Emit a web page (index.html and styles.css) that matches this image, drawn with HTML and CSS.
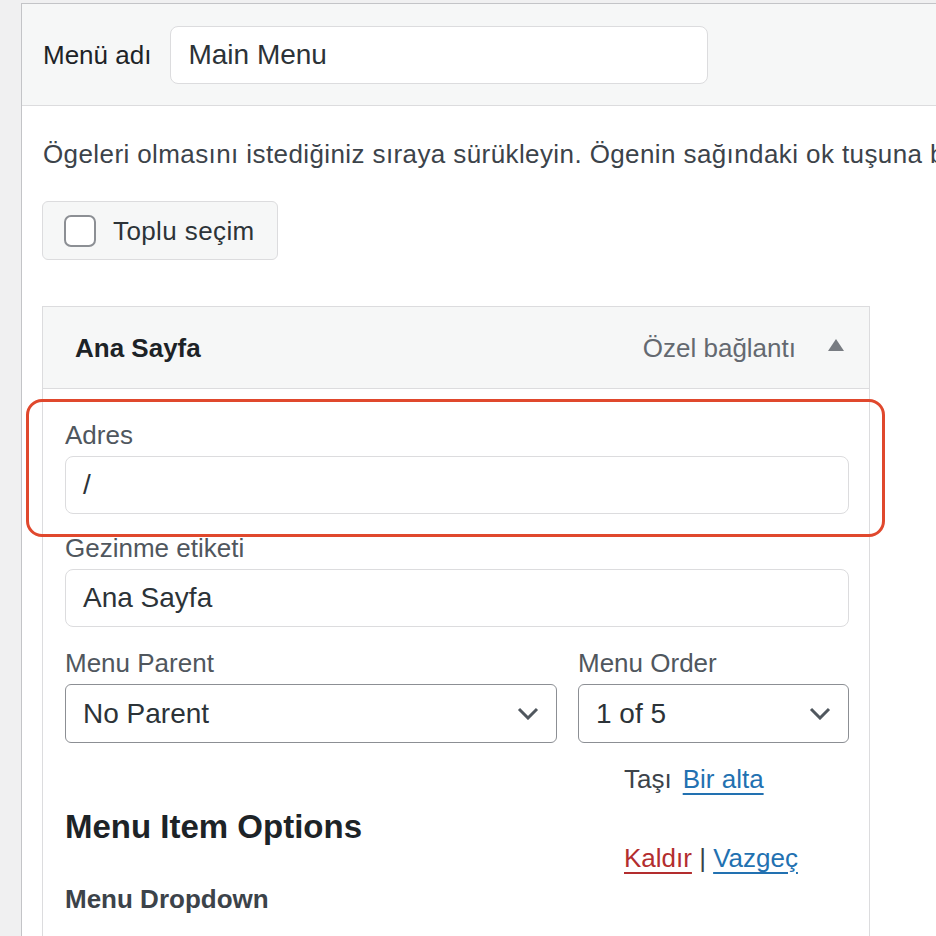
FILE: index.html
```html
<!DOCTYPE html>
<html lang="tr">
<head>
    <meta charset="UTF-8">
    <meta name="viewport" content="width=device-width, initial-scale=1.0">
    <title>Menüler</title>
    <link rel="stylesheet" href="styles.css">
</head>
<body>
    <div class="page">
        <div class="menu-panel">
            <div class="menu-name">
                <label class="menu-name-label">Menü adı</label>
                <div class="text-input menu-name-input">Main Menu</div>
            </div>

            <div class="menu-body">
                <p class="instructions">Ögeleri olmasını istediğiniz sıraya sürükleyin. Ögenin sağındaki ok tuşuna basarak ek yapılandırma seçeneklerini görebilirsiniz.</p>

                <div class="bulk-button">
                    <span class="checkbox"></span>
                    <span>Toplu seçim</span>
                </div>

                <div class="menu-item">
                    <div class="item-bar">
                        <span class="item-title">Ana Sayfa</span>
                        <span class="item-controls">
                            <span class="item-type">Özel bağlantı</span>
                            <svg class="item-toggle" width="16" height="12" viewBox="0 0 16 12"><path d="M8 0 L16 12 L0 12 Z" fill="#787c82"/></svg>
                        </span>
                    </div>

                    <div class="item-settings">
                        <div class="field field-url">
                            <label class="field-label">Adres</label>
                            <div class="text-input">/</div>
                            <div class="highlight"></div>
                        </div>

                        <div class="field field-title">
                            <label class="field-label">Gezinme etiketi</label>
                            <div class="text-input">Ana Sayfa</div>
                        </div>

                        <div class="field-row">
                            <div class="field field-parent">
                                <label class="field-label">Menu Parent</label>
                                <div class="select">
                                    <span>No Parent</span>
                                    <svg width="22" height="13" viewBox="0 0 22 13"><path d="M2 2 L11 11 L20 2" fill="none" stroke="#50575e" stroke-width="3"/></svg>
                                </div>
                            </div>
                            <div class="field field-order">
                                <label class="field-label">Menu Order</label>
                                <div class="select">
                                    <span>1 of 5</span>
                                    <svg width="22" height="13" viewBox="0 0 22 13"><path d="M2 2 L11 11 L20 2" fill="none" stroke="#50575e" stroke-width="3"/></svg>
                                </div>
                            </div>
                        </div>

                        <div class="item-footer">
                            <div class="item-options">
                                <h3>Menu Item Options</h3>
                                <h4>Menu Dropdown</h4>
                            </div>
                            <div class="item-actions">
                                <div class="move-line">
                                    <span>Taşı</span>
                                    <a href="#" class="link">Bir alta</a>
                                </div>
                                <div class="action-line">
                                    <a href="#" class="link delete">Kaldır</a> | <a href="#" class="link">Vazgeç</a>
                                </div>
                            </div>
                        </div>
                    </div>
                </div>
            </div>
        </div>
    </div>
</body>
</html>
```

FILE: styles.css
```css
body {
    margin: 0;
    background: #f0f0f1;
    font-family: "Liberation Sans", Arial, sans-serif;
    font-size: 26px;
    line-height: 36px;
    color: #3c434a;
    overflow: hidden;
    height: 936px;
}
.page {
    padding: 3px 0 0 21px;
}
.menu-panel {
    width: 1200px;
    height: 1000px;
    background: white;
    border-top: 1px solid #c3c4c7;
    border-left: 1px solid #c3c4c7;
}
.menu-name {
    display: flex;
    align-items: center;
    height: 58px;
    padding: 22px 21px 21px;
    background: #f6f7f7;
    border-bottom: 1px solid #dcdcde;
}
.menu-name-label {
    color: #1d2327;
    margin-right: 19px;
}
.text-input {
    box-sizing: border-box;
    height: 58px;
    display: flex;
    align-items: center;
    padding: 0 17px;
    font-size: 28px;
    color: #2c3338;
    background: white;
    border: 1px solid #dcdcde;
    border-radius: 8px;
}
.menu-name-input {
    width: 538px;
}
.menu-body {
    padding: 30px 20px 0;
}
.instructions {
    margin: 0;
    padding-left: 1px;
    white-space: nowrap;
    letter-spacing: 0.4px;
}
.bulk-button {
    display: inline-flex;
    align-items: center;
    gap: 17px;
    box-sizing: border-box;
    height: 59px;
    margin-top: 29px;
    padding: 0 22px 0 21px;
    background: #f6f7f7;
    border: 1px solid #dcdcde;
    border-radius: 6px;
    color: #2c3338;
    letter-spacing: 0.4px;
}
.checkbox {
    box-sizing: border-box;
    width: 32px;
    height: 32px;
    background: white;
    border: 2px solid #8c8f94;
    border-radius: 7px;
}
.menu-item {
    width: 828px;
    margin-top: 46px;
}
.item-bar {
    box-sizing: border-box;
    height: 83px;
    display: flex;
    align-items: center;
    justify-content: space-between;
    padding: 0 25px 0 32px;
    background: #f6f7f7;
    border: 1px solid #dcdcde;
}
.item-title {
    font-weight: bold;
    color: #1d2327;
}
.item-controls {
    display: flex;
    align-items: center;
    gap: 32px;
}
.item-type {
    color: #646970;
}
.item-toggle {
    margin-top: -6px;
}
.item-settings {
    padding: 28px 20px 60px 22px;
    border-left: 1px solid #dcdcde;
    border-right: 1px solid #dcdcde;
}
.field {
    display: flex;
    flex-direction: column;
}
.field-label {
    color: #50575e;
    margin-bottom: 3px;
}
.field-url {
    position: relative;
}
.highlight {
    position: absolute;
    left: -39px;
    right: -36px;
    top: -18px;
    bottom: -23px;
    border: 3px solid #e0482d;
    border-radius: 16px;
}
.field-title {
    margin-top: 16px;
}
.field-row {
    display: flex;
    gap: 21px;
    margin-top: 18px;
}
.field-parent {
    width: 492px;
}
.field-order {
    flex: 1;
}
.select {
    box-sizing: border-box;
    height: 59px;
    display: flex;
    align-items: center;
    justify-content: space-between;
    padding: 0 17px;
    font-size: 28px;
    color: #2c3338;
    border: 1px solid #8c8f94;
    border-radius: 6px;
}
.item-footer {
    display: flex;
    margin-top: 18px;
}
.item-options {
    flex: 1;
    padding-top: 43px;
}
.item-options h3 {
    margin: 0 0 31px;
    font-size: 33px;
    line-height: 46px;
    color: #1d2327;
}
.item-options h4 {
    margin: 0;
    font-size: 26px;
    line-height: 36px;
    color: #3c434a;
}
.item-actions {
    width: 225px;
}
.move-line {
    display: flex;
    gap: 11px;
}
.action-line {
    margin-top: 43px;
}
.link {
    color: #2271b1;
    text-decoration: underline;
    text-decoration-thickness: 2px;
    text-underline-offset: 5px;
}
.link.delete {
    color: #b32d2e;
}
```
